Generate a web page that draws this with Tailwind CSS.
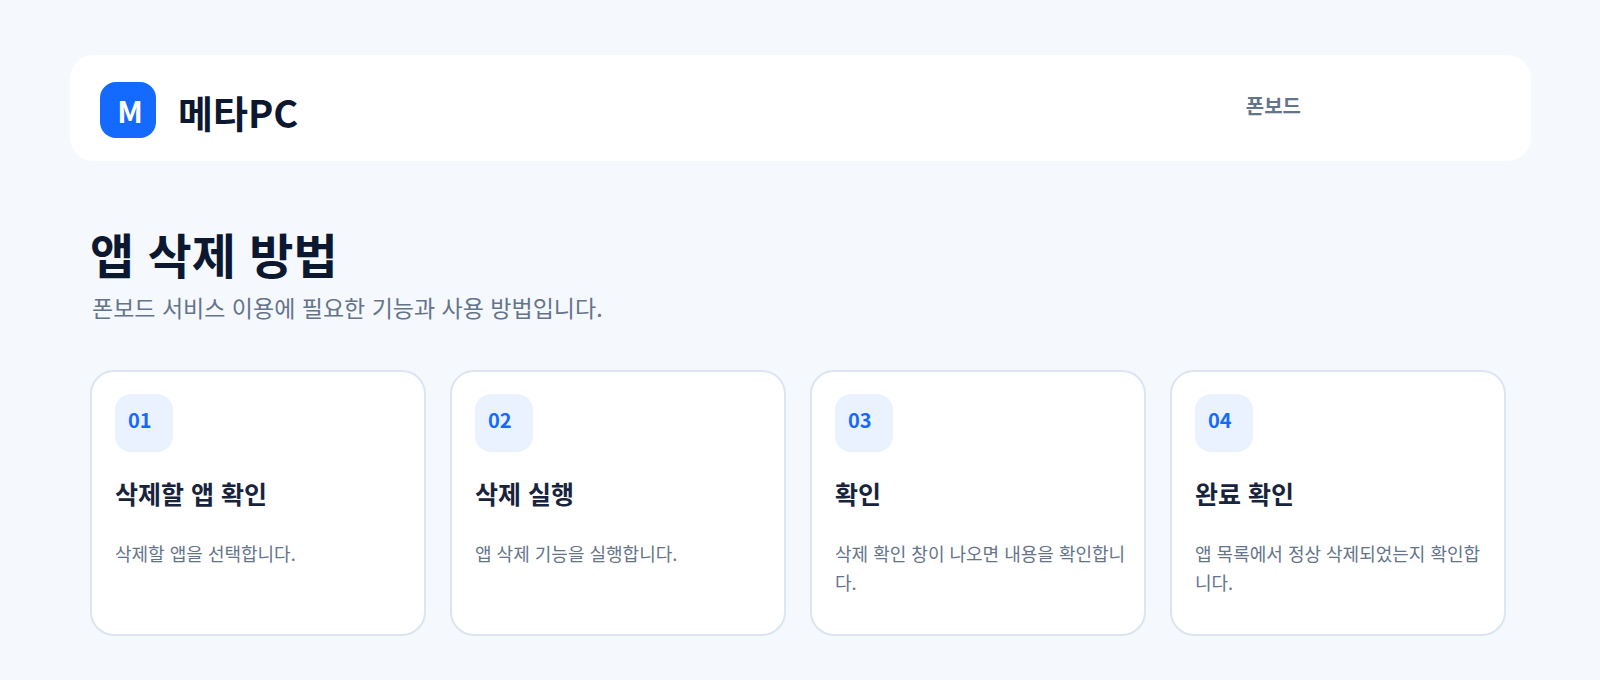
<!DOCTYPE html>
<html lang="ko">
<head>
<meta charset="utf-8">
<meta name="viewport" content="width=device-width, initial-scale=1">
<title>메타PC</title>
<script src="https://cdn.jsdelivr.net/npm/@tailwindcss/browser@4"></script>
</head>
<body class="min-h-screen bg-[#f5f8fd] font-['Noto_Sans_CJK_KR',sans-serif] text-[#0b1830]">
<header class="mr-[69px] ml-[70px] mt-[55px] flex h-[106px] items-center justify-between rounded-3xl bg-white pr-[230px] pl-[30px]">
  <div class="flex items-center gap-[22px] pt-1">
    <span class="flex size-14 items-center justify-center rounded-2xl bg-[#1469ff] pl-1 text-[30px] font-bold text-white">M</span>
    <span class="pt-1 text-[38px] font-bold leading-none">메타PC</span>
  </div>
  <nav class="pb-1"><a href="#" class="text-xl font-bold text-[#64748b]">폰보드</a></nav>
</header>
<main class="mr-[94px] ml-[90px] mt-[62px] pb-11">
  <h1 class="text-[48px] leading-[60px] font-bold">앱 삭제 방법</h1>
  <p class="mt-2 pl-0.5 text-[23px] leading-8 text-[#64748b]">폰보드 서비스 이용에 필요한 기능과 사용 방법입니다.</p>
  <ol class="mt-[47px] grid grid-cols-4 gap-6">
    <li class="min-h-[266px] rounded-3xl border-2 border-[#dce5f0] bg-white pt-[22px] pr-4 pl-[23px]">
      <span class="flex size-[58px] rounded-2xl bg-[#eaf2ff] pt-3 pl-[13px] text-xl font-bold text-[#1469ff]">01</span>
      <h2 class="mt-[23px] text-[25px] leading-9 font-bold text-[#17243c]">삭제할 앱 확인</h2>
      <p class="mt-7 text-lg leading-[29px] break-all text-[#64748b]">삭제할 앱을 선택합니다.</p>
    </li>
    <li class="min-h-[266px] rounded-3xl border-2 border-[#dce5f0] bg-white pt-[22px] pr-4 pl-[23px]">
      <span class="flex size-[58px] rounded-2xl bg-[#eaf2ff] pt-3 pl-[13px] text-xl font-bold text-[#1469ff]">02</span>
      <h2 class="mt-[23px] text-[25px] leading-9 font-bold text-[#17243c]">삭제 실행</h2>
      <p class="mt-7 text-lg leading-[29px] break-all text-[#64748b]">앱 삭제 기능을 실행합니다.</p>
    </li>
    <li class="min-h-[266px] rounded-3xl border-2 border-[#dce5f0] bg-white pt-[22px] pr-4 pl-[23px]">
      <span class="flex size-[58px] rounded-2xl bg-[#eaf2ff] pt-3 pl-[13px] text-xl font-bold text-[#1469ff]">03</span>
      <h2 class="mt-[23px] text-[25px] leading-9 font-bold text-[#17243c]">확인</h2>
      <p class="mt-7 text-lg leading-[29px] break-all text-[#64748b]">삭제 확인 창이 나오면 내용을 확인합니다.</p>
    </li>
    <li class="min-h-[266px] rounded-3xl border-2 border-[#dce5f0] bg-white pt-[22px] pr-4 pl-[23px]">
      <span class="flex size-[58px] rounded-2xl bg-[#eaf2ff] pt-3 pl-[13px] text-xl font-bold text-[#1469ff]">04</span>
      <h2 class="mt-[23px] text-[25px] leading-9 font-bold text-[#17243c]">완료 확인</h2>
      <p class="mt-7 text-lg leading-[29px] break-all text-[#64748b]">앱 목록에서 정상 삭제되었는지 확인합니다.</p>
    </li>
  </ol>
</main>
</body>
</html>
